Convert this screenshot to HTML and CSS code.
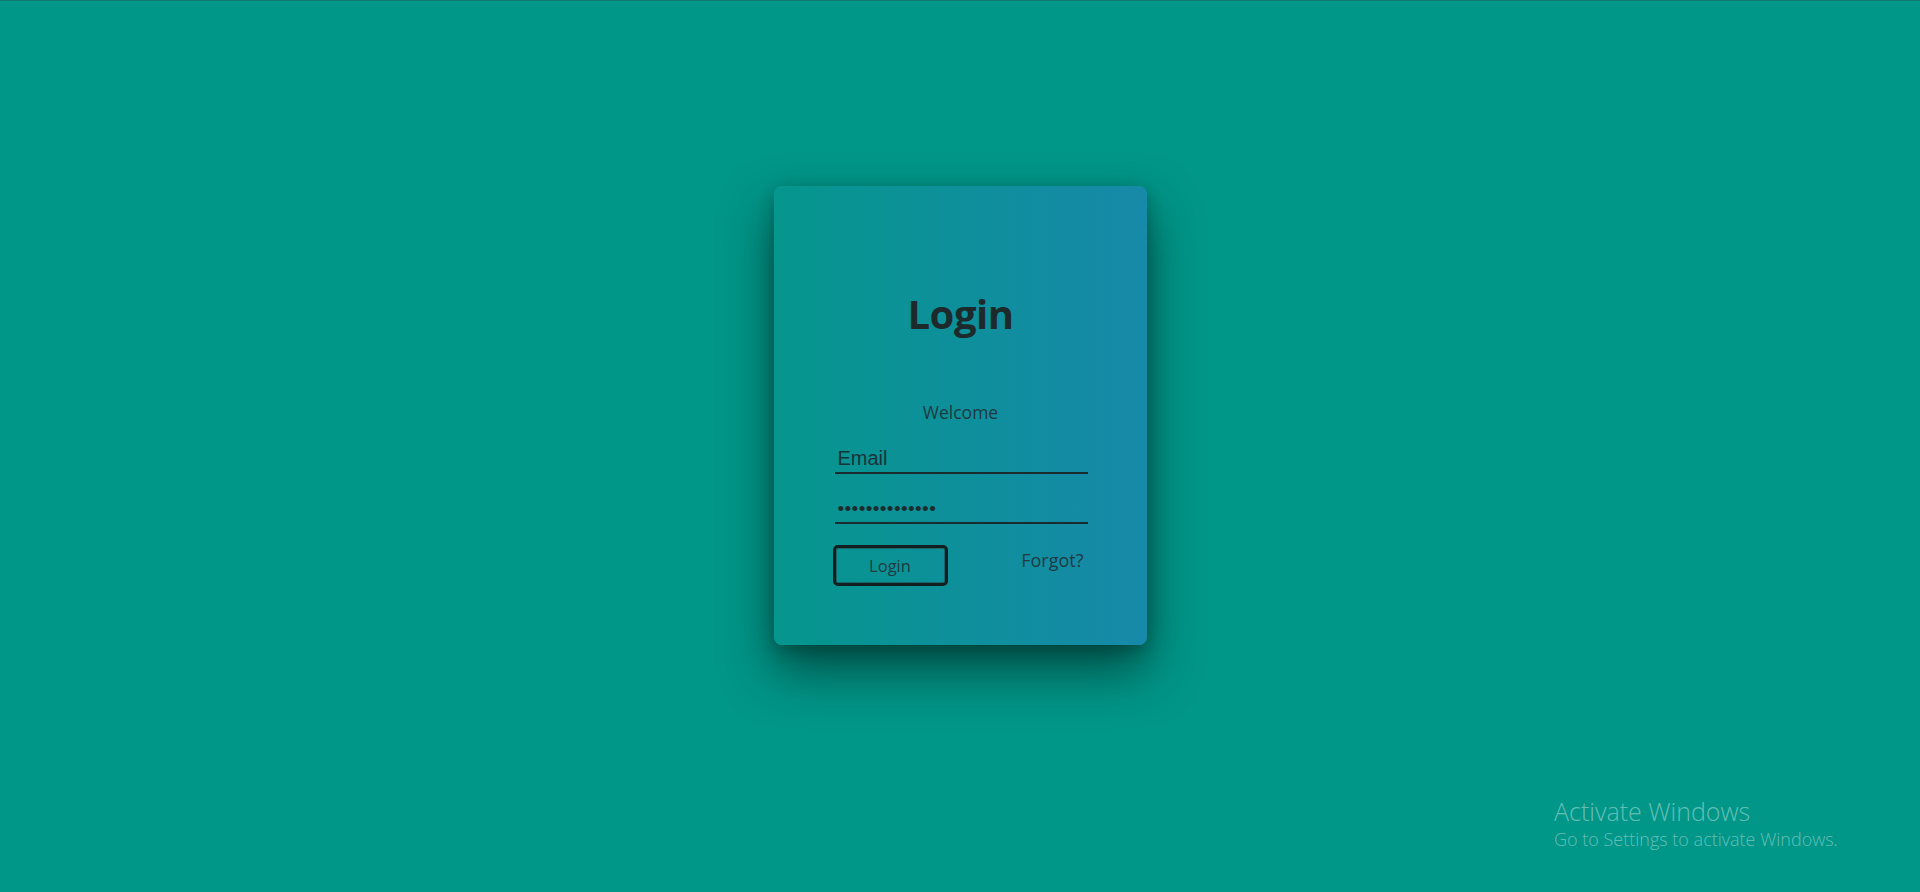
FILE: index.html
```html
<!DOCTYPE html>
<html lang="en">
<head>
<meta charset="utf-8">
<title>Login</title>
<link rel="stylesheet" href="styles.css">
</head>
<body>
<main class="page">
  <section class="card">
    <h1 class="title">Login</h1>
    <p class="welcome">Welcome</p>
    <form class="form">
      <input class="field" type="text" placeholder="Email">
      <input class="field field-pass" type="password" value="abcdefghijklmn">
      <div class="actions">
        <button class="btn" type="button">Login</button>
        <a class="forgot" href="#">Forgot?</a>
      </div>
    </form>
  </section>
</main>
<div class="watermark">
  <div class="wm-title">Activate Windows</div>
  <div class="wm-sub">Go to Settings to activate Windows.</div>
</div>
</body>
</html>
```

FILE: styles.css
```css
html, body {
  margin: 0;
  padding: 0;
}
body {
  background: #009688;
  height: 892px;
  overflow: hidden;
  border-top: 1px solid #12796f;
  box-sizing: border-box;
  font-family: "Open Sans", "Noto Sans", sans-serif;
}
.page {
  display: flex;
  justify-content: center;
  padding-top: 185px;
}
.card {
  width: 373px;
  height: 459px;
  box-sizing: border-box;
  border-radius: 8px;
  background: linear-gradient(to right, #05968d, #1789a9);
  box-shadow: 0 25px 50px rgba(0, 35, 30, 0.65), 0 5px 15px rgba(0, 30, 25, 0.3);
  display: flex;
  flex-direction: column;
  align-items: center;
  padding-top: 108px;
  margin-left: 1px;
}
.title {
  margin: 0;
  font-size: 40px;
  line-height: 1;
  font-weight: 700;
  color: #1c2a2b;
  letter-spacing: -0.5px;
}
.welcome {
  margin: 70px 0 0;
  font-size: 17.5px;
  line-height: 1;
  color: #1e3a40;
}
.form {
  width: 253px;
  margin: 25px 0 0 1px;
  display: flex;
  flex-direction: column;
}
.field {
  display: block;
  width: 100%;
  box-sizing: border-box;
  border: none;
  border-bottom: 2px solid #1a2c2e;
  background: transparent;
  font-family: "Liberation Sans", Arial, sans-serif;
  font-size: 20px;
  color: #1a2c2e;
  padding: 1px 3px 2px;
  height: 27px;
  outline: none;
}
.field::placeholder {
  color: #1a3238;
  opacity: 1;
}
.field-pass {
  margin-top: 23px;
  font-size: 19px;
  letter-spacing: 0.4px;
}
.actions {
  margin-top: 21px;
  display: flex;
  justify-content: space-between;
  align-items: flex-start;
}
.btn {
  width: 115px;
  height: 41px;
  margin-left: -2px;
  box-sizing: border-box;
  border: 3px solid #131e20;
  border-radius: 5px;
  background: transparent;
  box-shadow: inset 0 0 0 1px rgba(40, 60, 62, 0.5);
  font-family: "Open Sans", "Noto Sans", sans-serif;
  font-size: 16.5px;
  color: #1f3a40;
  padding: 0;
  cursor: pointer;
}
.forgot {
  margin-top: 3px;
  margin-right: 4px;
  font-size: 18px;
  color: #1e3a42;
  text-decoration: none;
}
.watermark {
  position: absolute;
  left: 1554px;
  top: 795px;
  color: rgba(255, 255, 255, 0.4);
  font-family: "Open Sans", "Noto Sans", sans-serif;
  font-weight: 300;
}
.wm-title {
  font-size: 25px;
  line-height: 32px;
}
.wm-sub {
  font-size: 18px;
  line-height: 24px;
}
```
